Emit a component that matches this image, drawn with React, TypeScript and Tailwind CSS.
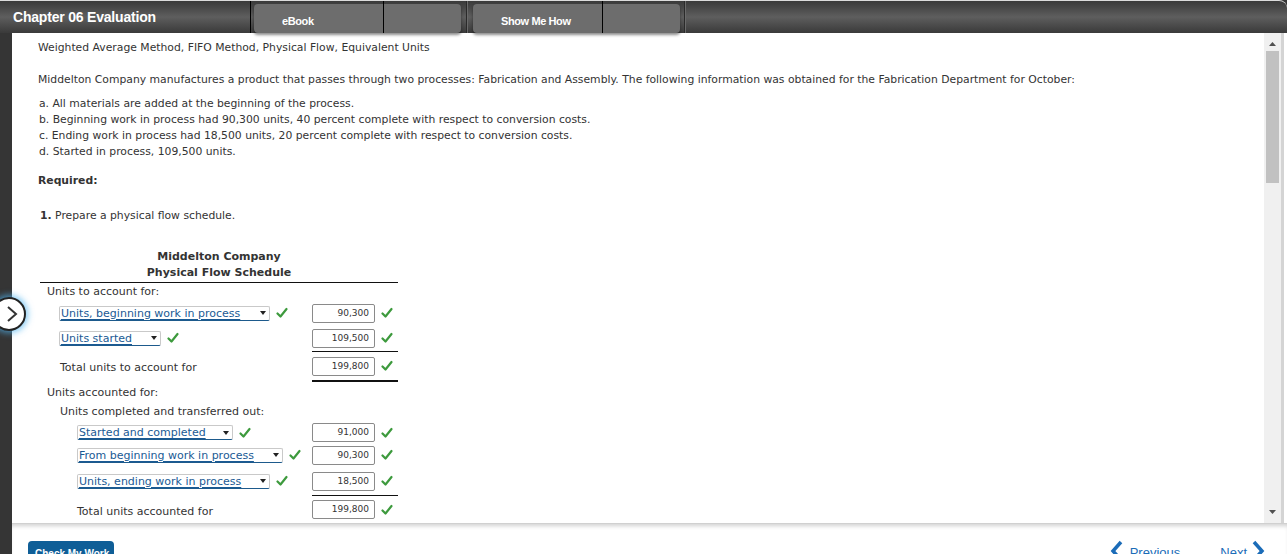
import React from "react";

const font = { fontFamily: '"DejaVu Sans", Verdana, sans-serif' };
const arial = { fontFamily: '"Liberation Sans", Arial, sans-serif' };

function Check() {
  return (
    <svg width="12" height="12" viewBox="0 0 12 12" className="shrink-0">
      <path d="M1.5 6.5 L4.5 9.5 L10.5 2" fill="none" stroke="#3d9a3d" strokeWidth="2.2" strokeLinecap="round" strokeLinejoin="round" />
    </svg>
  );
}

function Select({ label, width }: { label: string; width: string }) {
  return (
    <div className={`flex items-center h-[15px] border border-[#c9c9c9] border-b-[#1d5a8c] rounded-[2px] pl-[1px] pr-[3px] ${width}`}>
      <span className="flex-1 text-[#1a5a94] underline underline-offset-[2px] whitespace-nowrap leading-none">{label}</span>
      <svg width="6" height="4" viewBox="0 0 6 4" className="ml-1">
        <path d="M0 0 L6 0 L3 4 Z" fill="#222" />
      </svg>
    </div>
  );
}

function Value({ v }: { v: string }) {
  return (
    <div className="flex items-center gap-[6px]">
      <div className="w-[63px] h-[19px] border border-[#8a8a8a] rounded-[2px] bg-white text-right pr-[5px] text-[9px] leading-[17px] text-[#333]">{v}</div>
      <Check />
    </div>
  );
}

function Row({ h, children, value }: { h: string; children?: React.ReactNode; value?: string }) {
  return (
    <div className={`flex items-center ${h}`}>
      <div className="w-[272px] flex items-center">{children}</div>
      <div className="w-[86px]">{value && <Value v={value} />}</div>
    </div>
  );
}

function ValueLine({ thick }: { thick?: boolean }) {
  return (
    <div className="flex">
      <div className="w-[272px]" />
      <div className={`w-[86px] ${thick ? "h-[2px]" : "h-[1px]"} bg-[#111]`} />
    </div>
  );
}

export default function App() {
  return (
    <div className="h-[554px] w-full overflow-hidden bg-[#353535] flex flex-col relative" style={font}>
      {/* header */}
      <div className="h-[33px] shrink-0 relative flex items-stretch rounded-tr-[8px] bg-gradient-to-b from-[#3a3a3a] via-[#5e5e5e] to-[#3a3a3a] border-t border-[#dcdcdc]">
        <div className="w-[250px] pl-[13px] pt-[6px] text-white font-bold text-[14px] tracking-[-0.2px]" style={arial}>
          Chapter 06 Evaluation
        </div>
        <div className="w-[1px] bg-black" />
        <div className="ml-[3px] mt-[3px] w-[207px] h-[29px] rounded-[4px] bg-[#6d6d6d] shadow-[0_2px_3px_rgba(0,0,0,0.45)] flex">
          <div className="w-[129px] pl-[28px] pt-[9px] text-white text-[11px] font-bold tracking-[-0.4px]" style={arial}>eBook</div>
          <div className="w-[1px] bg-black -mt-[3px]" />
        </div>
        <div className="ml-[5px] w-[1px] bg-[#2a2a2a]" />
        <div className="w-[1px] bg-[#6a6a6a]" />
        <div className="ml-[5px] mt-[3px] w-[207px] h-[29px] rounded-[4px] bg-[#6d6d6d] shadow-[0_2px_3px_rgba(0,0,0,0.45)] flex">
          <div className="w-[129px] pl-[28px] pt-[9px] text-white text-[11px] font-bold tracking-[-0.4px] whitespace-nowrap" style={arial}>Show Me How</div>
          <div className="w-[1px] bg-black -mt-[3px]" />
        </div>
        <div className="ml-[4px] w-[1px] bg-[#2a2a2a]" />
        <div className="w-[1px] bg-[#6a6a6a]" />
      </div>

      {/* main */}
      <div className="flex-1 min-h-0 flex ml-[12px]">
        <div className="flex-1 bg-white overflow-hidden pl-[26px] pt-[7px] text-[10.8px] leading-[16px] text-[#333]">
          <p>Weighted Average Method, FIFO Method, Physical Flow, Equivalent Units</p>
          <p className="mt-[16px]">
            Middelton Company manufactures a product that passes through two processes: Fabrication and Assembly. The following information was obtained for the Fabrication Department for October:
          </p>
          <div className="mt-[8px] pl-[1px]">
            <p>a. All materials are added at the beginning of the process.</p>
            <p>b. Beginning work in process had 90,300 units, 40 percent complete with respect to conversion costs.</p>
            <p>c. Ending work in process had 18,500 units, 20 percent complete with respect to conversion costs.</p>
            <p>d. Started in process, 109,500 units.</p>
          </div>
          <p className="mt-[13px] font-bold">Required:</p>
          <p className="mt-[19px] pl-[2px]"><span className="font-bold">1.</span> Prepare a physical flow schedule.</p>

          <div className="mt-[25px] ml-[2px] w-[358px] text-[11px]">
            <div className="border-b border-[#111] pb-[1px] text-center font-bold leading-[16px]">
              <div>Middelton Company</div>
              <div>Physical Flow Schedule</div>
            </div>
            <Row h="h-[18px]"><span className="pl-[7px]">Units to account for:</span></Row>
            <Row h="h-[24px]" value="90,300">
              <div className="pl-[19px] flex items-center gap-[6px]"><Select label="Units, beginning work in process" width="w-[211px]" /><Check /></div>
            </Row>
            <Row h="h-[26px]" value="109,500">
              <div className="pl-[19px] flex items-center gap-[6px]"><Select label="Units started" width="w-[102px]" /><Check /></div>
            </Row>
            <ValueLine />
            <Row h="h-[28px]" value="199,800"><span className="pl-[20px] pt-[4px]">Total units to account for</span></Row>
            <ValueLine thick />
            <Row h="h-[20px]"><span className="pl-[7px] pt-[2px]">Units accounted for:</span></Row>
            <Row h="h-[20px]"><span className="pl-[20px]">Units completed and transferred out:</span></Row>
            <Row h="h-[21px]" value="91,000">
              <div className="pl-[37px] flex items-center gap-[6px]"><Select label="Started and completed" width="w-[156px]" /><Check /></div>
            </Row>
            <Row h="h-[24px]" value="90,300">
              <div className="pl-[37px] flex items-center gap-[6px]"><Select label="From beginning work in process" width="w-[206px]" /><Check /></div>
            </Row>
            <Row h="h-[28px]" value="18,500">
              <div className="pl-[37px] flex items-center gap-[6px]"><Select label="Units, ending work in process" width="w-[193px]" /><Check /></div>
            </Row>
            <ValueLine />
            <Row h="h-[27px]" value="199,800"><span className="pl-[37px] pt-[4px]">Total units accounted for</span></Row>
            <ValueLine />
          </div>
        </div>
        {/* scrollbar */}
        <div className="w-[17px] bg-[#f0f0f0] flex flex-col items-center">
          <svg width="7" height="4" viewBox="0 0 7 4" className="mt-[9px]"><path d="M0 4 L3.5 0 L7 4 Z" fill="#505050" /></svg>
          <div className="mt-[5px] w-[13px] h-[132px] bg-[#c1c1c1]" />
          <div className="flex-1" />
          <svg width="7" height="4" viewBox="0 0 7 4" className="mb-[9px]"><path d="M0 0 L7 0 L3.5 4 Z" fill="#505050" /></svg>
        </div>
        <div className="w-[3px] bg-[#d4d4d4]" />
        <div className="w-[3px] bg-white" />
      </div>

      {/* bottom bar */}
      <div className="h-[31px] shrink-0 ml-[12px] bg-white relative border-t border-[#d0d0d0] shadow-[inset_0_4px_4px_-2px_rgba(0,0,0,0.18)]">
        <div className="absolute left-[16px] top-[17px] w-[86px] h-[22px] rounded-[4px] bg-[#0f5e97] text-white text-[10px] font-bold pl-[7px] pt-[5px] whitespace-nowrap" style={arial}>
          Check My Work
        </div>
        <div className="absolute right-[22px] top-[16px] flex items-start text-[#1b6cb8] text-[13px]" style={arial}>
          <svg width="14" height="22" viewBox="0 0 14 22"><path d="M11 2 L3 11 L11 20" fill="none" stroke="#1b6cb8" strokeWidth="3.5" /></svg>
          <span className="ml-[6px] mt-[3px]">Previous</span>
          <span className="ml-[40px] mt-[3px]">Next</span>
          <svg width="14" height="22" viewBox="0 0 14 22" className="ml-[4px]"><path d="M3 2 L11 11 L3 20" fill="none" stroke="#1b6cb8" strokeWidth="3.5" /></svg>
        </div>
      </div>

      {/* side arrow button */}
      <div className="absolute left-[-8px] top-[297px] w-[34px] h-[34px] rounded-full bg-white border-[2px] border-[#222] shadow-[0_0_6px_2px_rgba(80,180,240,0.7)] flex items-center justify-end pr-[6px]">
        <svg width="12" height="18" viewBox="0 0 12 18"><path d="M2 2 L10 9 L2 16" fill="none" stroke="#333" strokeWidth="2" /></svg>
      </div>
    </div>
  );
}
